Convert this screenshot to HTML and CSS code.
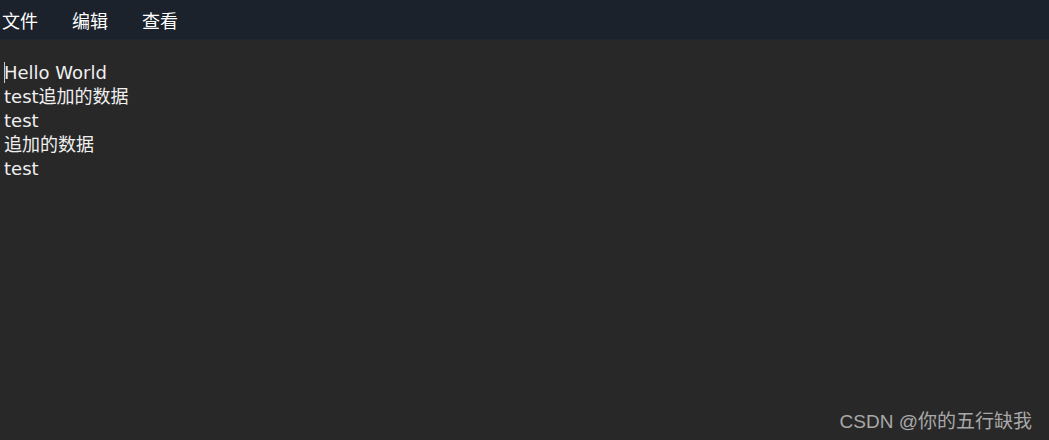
FILE: index.html
```html
<!DOCTYPE html>
<html lang="zh">
<head>
  <meta charset="UTF-8">
  <title>记事本</title>
  <link rel="stylesheet" href="styles.css">
</head>
<body>
  <div class="menu-bar">
    <span class="menu-item">文件</span>
    <span class="menu-item">编辑</span>
    <span class="menu-item">查看</span>
  </div>

  <div class="editor">
    <div class="line"><span class="caret"></span>Hello World</div>
    <div class="line">test追加的数据</div>
    <div class="line">test</div>
    <div class="line">追加的数据</div>
    <div class="line">test</div>
  </div>

  <div class="watermark">CSDN @你的五行缺我</div>
</body>
</html>
```

FILE: styles.css
```css
/* 基础 */
html, body {
  height: 100%;
}

body {
  margin: 0;
  background-color: #282828;
  color: #f0f0f0;
  font-family: "Noto Sans CJK SC", sans-serif;
  display: flex;
  flex-direction: column;
  overflow: hidden;
}

/* 菜单栏 */
.menu-bar {
  height: 39px;
  background-color: #1b222b;
  display: flex;
  align-items: center;
  gap: 34px;
  padding-left: 2px;
  border-bottom: 1px solid #20262d;
}

.menu-item {
  font-size: 18px;
  color: #ffffff;
  line-height: 1;
}

/* 编辑区 */
.editor {
  flex: 1;
  padding: 21px 4px 0;
  font-family: "DejaVu Sans", "Noto Sans CJK SC", sans-serif;
  font-size: 18px;
  line-height: 24px;
}

.line {
  position: relative;
}

.caret {
  position: absolute;
  left: 0;
  top: 1px;
  width: 1px;
  height: 21px;
  background-color: #c8c8c8;
}

/* 水印 */
.watermark {
  position: absolute;
  right: 17px;
  bottom: 7px;
  font-family: "Liberation Sans", "Noto Sans CJK SC", sans-serif;
  font-size: 19px;
  color: #a8a8a8;
}
```
